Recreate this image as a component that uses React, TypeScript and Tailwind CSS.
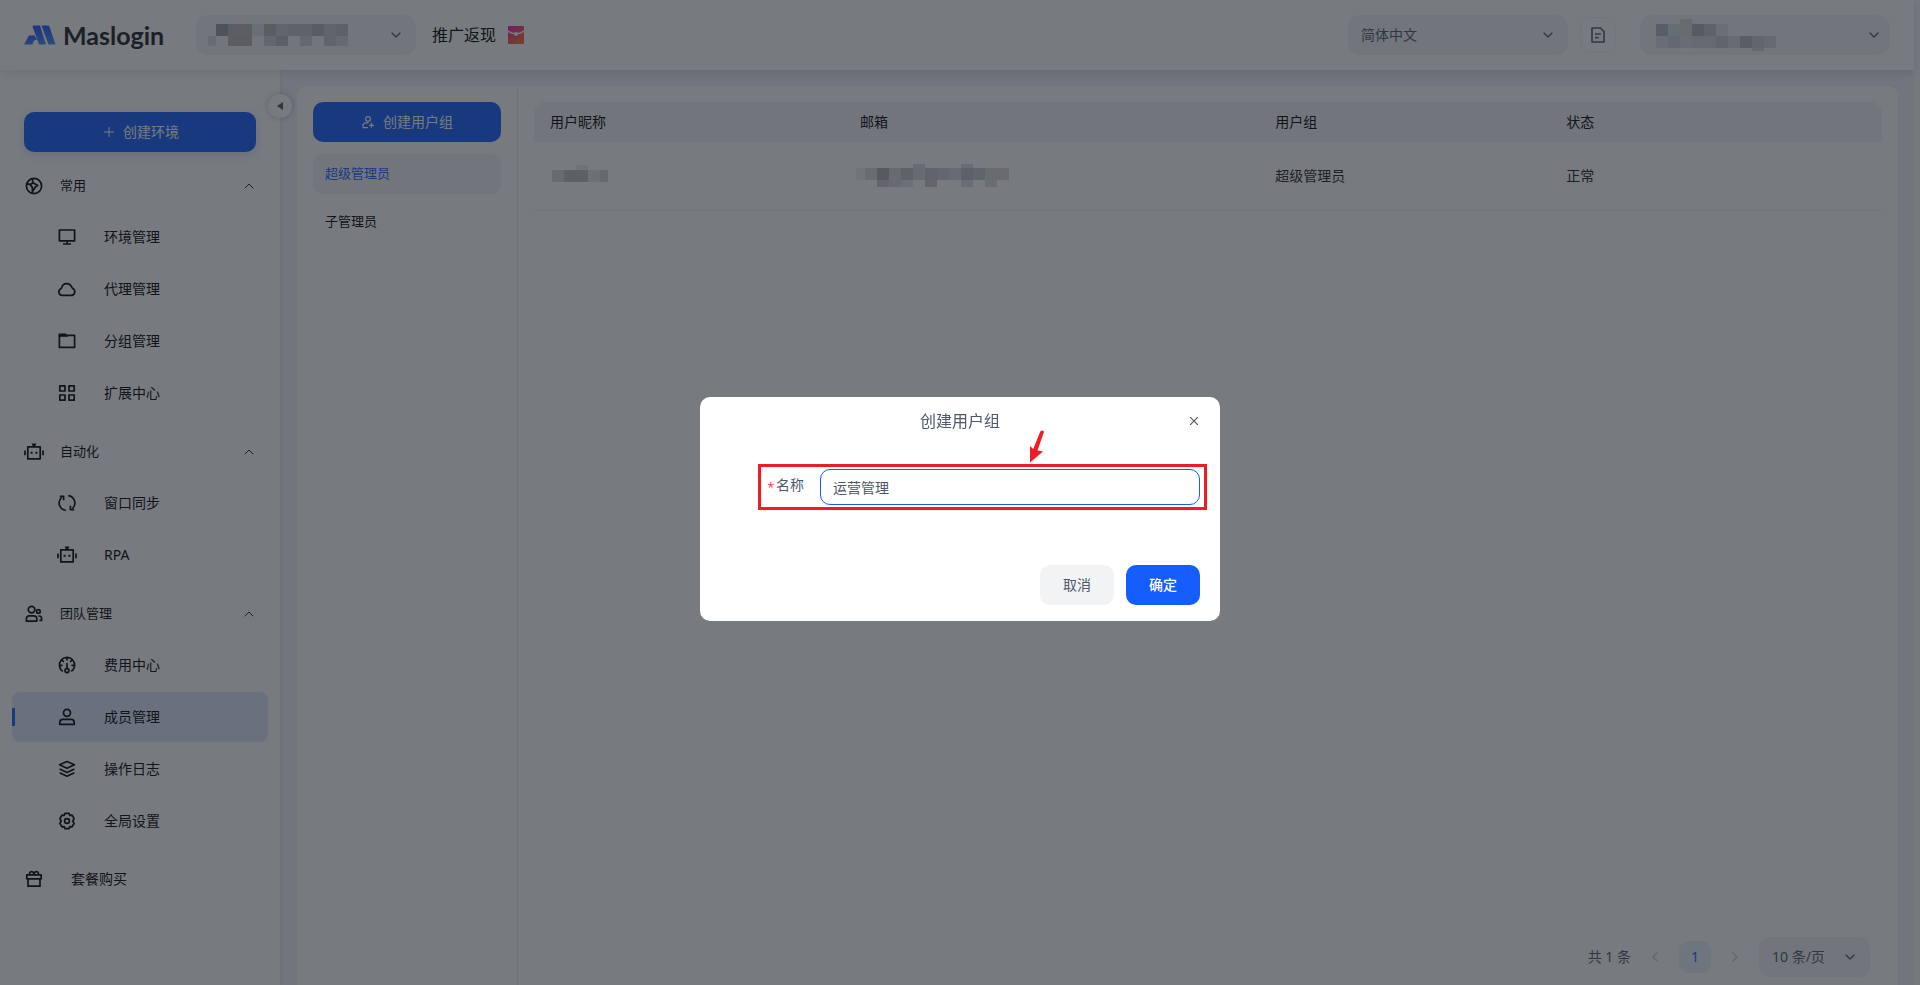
import type { ReactNode } from 'react';
import { LuChevronDown, LuChevronLeft, LuChevronRight, LuChevronUp, LuPlus } from 'react-icons/lu';

type MenuItem = { label: string; icon: ReactNode; active?: boolean };
type MenuGroup = { label: string; icon: ReactNode; items: MenuItem[] };
type Block = [x: number, y: number, w: number, h: number, fill: string];

const Icon = ({ children }: { children: ReactNode }) => (
  <svg
    viewBox="0 0 20 20"
    className="size-5 shrink-0"
    fill="none"
    stroke="currentColor"
    strokeWidth="1.7"
    strokeLinejoin="round"
    aria-hidden="true"
  >
    {children}
  </svg>
);

const globeIcon = (
  <Icon>
    <circle cx="10" cy="10" r="7.6" />
    <path d="M8.6 2.6v4.6L6 8.4l-3.4-.6M6 8.4l2.4 3v6M8.6 6.4l5.2 3-2.6 1.8-2.6 4.2" />
  </Icon>
);

const monitorIcon = (
  <Icon>
    <path d="M2.4 3h15.2v10.8H2.4zM10 13.8v3M6 17h8" />
  </Icon>
);

const cloudIcon = (
  <Icon>
    <path d="M5.4 16.4a3.5 3.5 0 0 1-1.6-6.6c.6-.3.8-.8 1-1.6a5.2 5.2 0 0 1 9.8-.4c.3.8.6 1.2 1.3 1.7a3.7 3.7 0 0 1-1.9 6.9H5.4Z" />
  </Icon>
);

const folderIcon = (
  <Icon>
    <path d="M2.4 4.4h15.2v12H2.4z" />
    <path d="M1.6 2.6h7.2l2.4 3.2H1.6z" fill="currentColor" stroke="none" />
  </Icon>
);

const gridIcon = (
  <Icon>
    <path d="M2.8 2.8H8V8H2.8zM12 2.8h5.2V8H12zM2.8 12H8v5.2H2.8zM12 12h5.2v5.2H12z" />
  </Icon>
);

const robotIcon = (
  <Icon>
    <path d="M3.8 4.8h12.4v12H3.8zM1 8.4v4.8M19 8.4v4.8" />
    <path d="M7.6 1.6h4.8l-1.4 3H9zM6.6 9.8h2v2h-2zM11.4 9.8h2v2h-2z" fill="currentColor" stroke="none" />
  </Icon>
);

const syncIcon = (
  <Icon>
    <path d="M8.8 17.4A7.5 7.5 0 0 1 4.6 4.4M11.2 2.6a7.5 7.5 0 0 1 4.2 13" />
    <path d="M2.8 3.4h3.8v3.8M17.2 16.6h-3.8v-3.8" />
  </Icon>
);

const teamIcon = (
  <Icon>
    <circle cx="7.6" cy="5.6" r="3.3" />
    <circle cx="14.4" cy="7.4" r="1.8" />
    <path d="M2.4 17.2v-2.6a2.8 2.8 0 0 1 2.8-2.8H10a2.8 2.8 0 0 1 2.8 2.8v2.6zM14.4 12h1a2.2 2.2 0 0 1 2.2 2.2v2.2h-2.2" />
  </Icon>
);

const gaugeIcon = (
  <Icon>
    <path d="M5.8 16.4a7.6 7.6 0 1 1 8.4 0M10 2.6v3M2.6 10.4h3M14.4 10.4h3M5 5.2 6.800 7M15 5.2 13.200 7M10 8v5" />
    <circle cx="10" cy="15.6" r="2" />
  </Icon>
);

const userIcon = (
  <Icon>
    <circle cx="10" cy="5.8" r="3.5" />
    <path d="M2.8 17.4v-1.8A3.2 3.2 0 0 1 6 12.4h8a3.2 3.2 0 0 1 3.2 3.2v1.8z" />
  </Icon>
);

const layersIcon = (
  <Icon>
    <path d="M10 2.4 17.4 5.8 10 9.2 2.6 5.8zM2.6 10l7.4 3.4 7.4-3.4M2.6 13.8l7.4 3.4 7.4-3.4" />
  </Icon>
);

const gearIcon = (
  <Icon>
    <path d="M8 2.4h4l.8 2 2.3-.2 2 3.4-1.300 2.400 1.300 2.400-2 3.400-2.300-.2-.8 2H8l-.8-2-2.300.2-2-3.400L4.200 10 2.900 7.600l2-3.400 2.300.2z" />
    <circle cx="10" cy="10" r="2.4" />
  </Icon>
);

const giftIcon = (
  <Icon>
    <path d="M2.8 5.8h14.4v4H2.8zM4 9.8h12v7.4H4zM5.8 5.8C4.6 2.2 8.6 1.6 10 4.6c1.4-3 5.4-2.4 4.2 1.2" />
  </Icon>
);

const groups: MenuGroup[] = [
  {
    label: '常用',
    icon: globeIcon,
    items: [
      { label: '环境管理', icon: monitorIcon },
      { label: '代理管理', icon: cloudIcon },
      { label: '分组管理', icon: folderIcon },
      { label: '扩展中心', icon: gridIcon },
    ],
  },
  {
    label: '自动化',
    icon: robotIcon,
    items: [
      { label: '窗口同步', icon: syncIcon },
      { label: 'RPA', icon: robotIcon },
    ],
  },
  {
    label: '团队管理',
    icon: teamIcon,
    items: [
      { label: '费用中心', icon: gaugeIcon },
      { label: '成员管理', icon: userIcon, active: true },
      { label: '操作日志', icon: layersIcon },
      { label: '全局设置', icon: gearIcon },
    ],
  },
];

// 打码色块
const accountBlocks: Block[] = [
  [8, 0, 12, 12, '#999ba0'],
  [20, 0, 24, 12, '#bbb9ba'],
  [44, 0, 12, 12, '#dfe1e8'],
  [56, 0, 12, 12, '#b9b7b8'],
  [68, 0, 12, 12, '#c9cacf'],
  [80, 0, 24, 12, '#c0c2c8'],
  [104, 0, 12, 12, '#b4b6ba'],
  [116, 0, 12, 12, '#c6c8cd'],
  [128, 0, 12, 12, '#bcbec5'],
  [0, 12, 8, 10, '#dadbde'],
  [20, 12, 24, 10, '#b9b6b5'],
  [56, 12, 12, 10, '#cdced3'],
  [68, 12, 12, 10, '#babdc4'],
  [92, 12, 12, 10, '#d0d2d7'],
  [116, 12, 12, 10, '#c8cace'],
  [128, 12, 12, 10, '#d3d5da'],
];

const userBlocks: Block[] = [
  [0, 0, 24, 5, '#f0f0f1'],
  [24, 0, 12, 5, '#d7d8d8'],
  [36, 0, 24, 5, '#f0f0f1'],
  [0, 5, 12, 12, '#b0bac4'],
  [12, 5, 12, 12, '#dadde0'],
  [24, 5, 12, 12, '#dadbdb'],
  [36, 5, 12, 12, '#adb0b9'],
  [48, 5, 12, 12, '#c0c3ca'],
  [60, 5, 12, 12, '#dfe0e8'],
  [0, 17, 12, 12, '#dddfe7'],
  [12, 17, 12, 12, '#d0d3db'],
  [24, 17, 12, 12, '#d9dce4'],
  [36, 17, 24, 12, '#d2d5dd'],
  [60, 17, 12, 12, '#c6c9d2'],
  [72, 17, 12, 12, '#d6d9e0'],
  [84, 17, 12, 12, '#b3b6bc'],
  [96, 17, 12, 12, '#c7cad2'],
  [108, 17, 12, 12, '#d3d6df'],
  [0, 29, 24, 3, '#f6f6f7'],
  [24, 29, 12, 3, '#fafafa'],
  [36, 29, 36, 3, '#f6f6f7'],
  [96, 29, 12, 3, '#d3d6de'],
];

const nameBlocks: Block[] = [
  [0, 5, 12, 12, '#dad9da'],
  [12, 5, 12, 12, '#b9bbc4'],
  [24, 5, 12, 12, '#bdbdbe'],
  [24, 0, 12, 5, '#eeeeee'],
  [36, 5, 12, 12, '#e6e6e9'],
  [48, 5, 8, 12, '#d4d5da'],
];

const mailBlocks: Block[] = [
  [0, 4, 9, 12, '#f0f0f0'],
  [9, 4, 12, 12, '#dcdcdd'],
  [21, 4, 12, 12, '#b0b1b3'],
  [33, 4, 12, 12, '#dadbdc'],
  [45, 4, 12, 12, '#c0c2c9'],
  [57, 0, 12, 16, '#d9dadb'],
  [69, 4, 12, 12, '#c9cacc'],
  [81, 4, 12, 12, '#ced1da'],
  [93, 4, 12, 12, '#d6d9e2'],
  [105, 0, 12, 4, '#dcdde0'],
  [105, 4, 12, 12, '#bcbfc9'],
  [117, 4, 12, 12, '#c5c8d2'],
  [129, 4, 24, 12, '#dcdadb'],
  [21, 16, 12, 7, '#cccacb'],
  [33, 16, 12, 7, '#d8d8d9'],
  [45, 16, 12, 7, '#e6e6ea'],
  [69, 16, 12, 7, '#cfccce'],
  [105, 16, 12, 7, '#dedfe7'],
  [129, 16, 12, 7, '#e0dfe2'],
];

const Mosaic = ({ width, height, blocks }: { width: number; height: number; blocks: Block[] }) => (
  <svg width={width} height={height} shapeRendering="crispEdges" aria-hidden="true">
    {blocks.map(([x, y, w, h, fill]) => (
      <rect key={`${x}-${y}`} x={x} y={y} width={w} height={h} fill={fill} />
    ))}
  </svg>
);

const Logo = () => (
  <a href="#home" className="flex items-center gap-[7px] text-[#1d2129]">
    <svg width="32" height="20" viewBox="0 0 32 20" aria-hidden="true">
      <defs>
        <linearGradient id="logo" x1="0" y1="0" x2="0" y2="1">
          <stop offset="0" stopColor="#2b4dff" />
          <stop offset="1" stopColor="#3f8cf0" />
        </linearGradient>
      </defs>
      <path d="M8.5 1.5Q9 .5 10 .5h6l6 19h-7L12 11z" fill="url(#logo)" />
      <path d="M17.5.5H24q1 0 1.4 1l6.100 18h-7z" fill="url(#logo)" />
      <path d="M5 10.5h5.5l2.5 4-3 1-1.500 4H0z" fill="url(#logo)" />
    </svg>
    <span className="font-['Lato',sans-serif] text-[25px] leading-8 font-bold">Maslogin</span>
  </a>
);

const Header = () => (
  <header className="relative z-20 flex h-[70px] shrink-0 items-center bg-white px-6 shadow-[0_2px_10px_rgba(0,0,0,0.12)]">
    <Logo />
    <button
      type="button"
      aria-label="切换团队"
      className="ml-8 flex h-10 w-[220px] items-center justify-between rounded-xl bg-[#f2f3f8] px-3 text-[#4e5969]"
    >
      <Mosaic width={140} height={22} blocks={accountBlocks} />
      <LuChevronDown className="size-4" />
    </button>
    <a href="#promotion" className="ml-4 flex items-center gap-3 text-base text-black">
      推广返现
      <svg width="16" height="18" viewBox="0 0 16 18" aria-hidden="true">
        <defs>
          <linearGradient id="packet" x1="0" y1="0" x2="0.6" y2="1">
            <stop offset="0" stopColor="#f018b8" />
            <stop offset="1" stopColor="#ff6a2c" />
          </linearGradient>
        </defs>
        <rect width="16" height="18" rx="1" fill="url(#packet)" />
        <path d="M0 5q8 5.5 16 0" fill="none" stroke="#fff" strokeWidth="1.5" />
        <circle cx="8" cy="8" r="2" fill="#fff" />
      </svg>
    </a>
    <div className="ml-auto flex items-center">
      <div className="relative">
        <select
          aria-label="语言"
          className="h-10 w-[220px] appearance-none rounded-xl bg-[#f2f3f8] px-[13px] text-sm text-[#4e5969]"
        >
          <option>简体中文</option>
        </select>
        <LuChevronDown className="pointer-events-none absolute top-3 right-3 size-4 text-[#4e5969]" />
      </div>
      <button
        type="button"
        aria-label="文档"
        className="ml-3 flex size-9 items-center justify-center rounded-xl border border-[#f2f3f5] text-[#4e5969]"
      >
        <svg width="16" height="18" viewBox="0 0 16 18" fill="none" stroke="currentColor" strokeWidth="1.6" aria-hidden="true">
          <path d="M2 2h8.5L14 5.500V16H2zM5 8h6M5 11.600h3.600" strokeLinejoin="round" />
        </svg>
      </button>
      <button
        type="button"
        aria-label="账户"
        className="ml-6 flex h-10 w-[250px] items-center justify-between rounded-xl bg-[#f2f3f8] pr-2 pl-4 text-[#4e5969]"
      >
        <Mosaic width={120} height={32} blocks={userBlocks} />
        <LuChevronDown className="size-4" />
      </button>
    </div>
  </header>
);

const Sidebar = () => (
  <aside className="relative z-10 w-[280px] shrink-0 bg-white pt-[42px] shadow-[0_0_4px_rgba(0,0,0,0.1)]">
    <div className="px-6">
      <button
        type="button"
        className="flex h-10 w-full items-center justify-center gap-1.5 rounded-[10px] bg-[#165dff] text-sm text-white shadow-[0_3px_8px_rgba(22,93,255,0.2)]"
      >
        <LuPlus className="size-4" strokeWidth={1.5} />
        创建环境
      </button>
    </div>
    <button
      type="button"
      aria-label="收起菜单"
      className="absolute top-6 -right-3 flex size-6 items-center justify-center rounded-full bg-white shadow-[0_0_6px_rgba(0,0,0,0.25)]"
    >
      <svg width="6" height="8" viewBox="0 0 6 8" aria-hidden="true">
        <path d="M6 0v8L0 4z" fill="#4e5969" />
      </svg>
    </button>
    <nav className="mt-[9px] flex flex-col gap-[9px] px-3 text-black">
      {groups.map((group) => (
        <section key={group.label}>
          <button type="button" className="flex h-[50px] w-full items-center gap-4 pr-[11px] pl-3 text-[13px]">
            {group.icon}
            {group.label}
            <LuChevronUp className="ml-auto size-4 text-[#1d2129]" strokeWidth={1.5} />
          </button>
          <ul className="mt-px flex flex-col gap-0.5">
            {group.items.map((item) => (
              <li key={item.label} className={item.active ? 'relative rounded-lg bg-[#e1e6ff]' : ''}>
                {item.active && <span className="absolute top-4 left-0 h-[18px] w-[3px] bg-[#165dff]" />}
                <a href={`#${item.label}`} className="flex h-[50px] items-center gap-[27px] pl-[45px] text-sm">
                  {item.icon}
                  {item.label}
                </a>
              </li>
            ))}
          </ul>
        </section>
      ))}
      <a href="#plans" className="flex h-12 items-center gap-[27px] px-3 text-sm">
        {giftIcon}
        套餐购买
      </a>
    </nav>
  </aside>
);

const UserGroups = () => (
  <section className="w-[221px] shrink-0 border-r border-[#e5e6eb] p-4">
    <button
      type="button"
      className="flex h-10 w-full items-center justify-center gap-2 rounded-[10px] bg-[#165dff] text-sm text-white"
    >
      <svg width="14" height="14" viewBox="0 0 14 14" fill="none" stroke="currentColor" strokeWidth="1.2" aria-hidden="true">
        <circle cx="7" cy="4" r="2.4" />
        <path d="M7.4 7.8H4.6A2.6 2.6 0 0 0 2 10.400v2.200h5M10.500 7.800v5M8 10.300h5" />
      </svg>
      创建用户组
    </button>
    <ul className="mt-3 flex flex-col gap-2 text-[13px]">
      <li>
        <a href="#super" className="flex h-10 items-center rounded-[10px] bg-[#f2f3f8] px-3 text-[#165dff]">
          超级管理员
        </a>
      </li>
      <li>
        <a href="#sub" className="flex h-10 items-center px-3 text-black">
          子管理员
        </a>
      </li>
    </ul>
  </section>
);

const Members = () => (
  <section className="flex min-w-0 flex-1 flex-col px-4 pt-4 pb-2">
    <table className="w-full table-fixed text-left text-sm text-black">
      <thead>
        <tr className="h-10 bg-[#f2f3f8]">
          <th className="w-[23%] rounded-tl-xl px-4 font-normal">用户昵称</th>
          <th className="w-[30.8%] px-4 font-normal">邮箱</th>
          <th className="w-[21.6%] px-4 font-normal">用户组</th>
          <th className="rounded-tr-xl px-4 font-normal">状态</th>
        </tr>
      </thead>
      <tbody>
        <tr className="h-[68px] border-b border-[#eff0f3] text-[#1d2129]">
          <td className="px-[18px]">
            <Mosaic width={56} height={22} blocks={nameBlocks} />
          </td>
          <td className="px-3">
            <Mosaic width={153} height={23} blocks={mailBlocks} />
          </td>
          <td className="px-4">超级管理员</td>
          <td className="px-4">正常</td>
        </tr>
      </tbody>
    </table>
    <div className="mt-auto mr-3 flex items-center justify-end gap-4 text-sm text-[#4e5969]">
      <span>共 1 条</span>
      <button type="button" aria-label="上一页" className="text-[#c9cdd4]">
        <LuChevronLeft className="size-4" />
      </button>
      <button type="button" className="size-8 rounded-[10px] bg-[#e8f3ff] text-[#165dff]">
        1
      </button>
      <button type="button" aria-label="下一页" className="text-[#c9cdd4]">
        <LuChevronRight className="size-4" />
      </button>
      <div className="relative">
        <select aria-label="每页条数" className="h-10 w-[111px] appearance-none rounded-[10px] bg-[#f2f3f8] px-[13px]">
          <option>10 条/页</option>
        </select>
        <LuChevronDown className="pointer-events-none absolute top-3 right-3 size-4" />
      </div>
    </div>
  </section>
);

const CreateGroupDialog = () => (
  <div className="fixed inset-0 z-50 flex items-center justify-center bg-[#1d2129]/60 pt-8">
    <form
      role="dialog"
      aria-labelledby="dialog-title"
      className="w-[520px] rounded-[10px] bg-white px-5 pb-4 text-sm text-[#4e5969]"
    >
      <div className="relative flex h-12 items-center justify-center">
        <h2 id="dialog-title" className="text-base">
          创建用户组
        </h2>
        <button type="button" aria-label="关闭" className="absolute right-0 flex size-3 items-center justify-center">
          <svg width="8" height="8" viewBox="0 0 8 8" stroke="currentColor" strokeWidth="1.2" aria-hidden="true">
            <path d="M0 0l8 8M8 0L0 8" />
          </svg>
        </button>
      </div>
      <div className="relative mt-6 flex h-9 items-center">
        {/* 标注框和箭头 */}
        <div className="pointer-events-none absolute -top-[5px] -right-[7px] -bottom-[5px] left-[38px] border-[3px] border-[#ee1c25]" />
        <svg
          width="20"
          height="34"
          viewBox="0 0 20 34"
          fill="#ee1c25"
          className="pointer-events-none absolute -top-10 right-[154px]"
          aria-hidden="true"
        >
          <path d="M4 17l3.200 3L14.200 2.800q1.800-2.400 3.800 0L11.500 21.500l5.500 1L4 33.500z" />
        </svg>
        <label htmlFor="group-name" className="flex w-[100px] shrink-0 items-center justify-end gap-0.5 pr-4 pb-1">
          <span className="pt-1.5 text-xs text-[#f53f3f]">*</span>
          名称
        </label>
        <input
          id="group-name"
          defaultValue="运营管理"
          className="h-9 min-w-0 flex-1 rounded-[10px] border border-[#165dff] px-3 outline-none"
        />
      </div>
      <div className="mt-[60px] flex justify-end gap-3">
        <button type="button" className="h-10 w-[74px] rounded-[10px] bg-[#f2f3f5]">
          取消
        </button>
        <button type="submit" className="h-10 w-[74px] rounded-[10px] bg-[#165dff] font-medium text-white">
          确定
        </button>
      </div>
    </form>
  </div>
);

/**
 * 成员管理页面。
 */
const App = () => {
  return (
    <div className="flex h-screen flex-col overflow-hidden bg-[#f9f9fb] pr-1.5 font-['Noto_Sans','Noto_Sans_CJK_SC',sans-serif]">
      <Header />
      <div className="flex min-h-0 flex-1 bg-[#f1f2fa]">
        <Sidebar />
        <main className="mt-4 mr-4 ml-[17px] flex min-w-0 flex-1 rounded-t-[10px] bg-white">
          <UserGroups />
          <Members />
        </main>
      </div>
      <CreateGroupDialog />
    </div>
  );
};

export default App;
